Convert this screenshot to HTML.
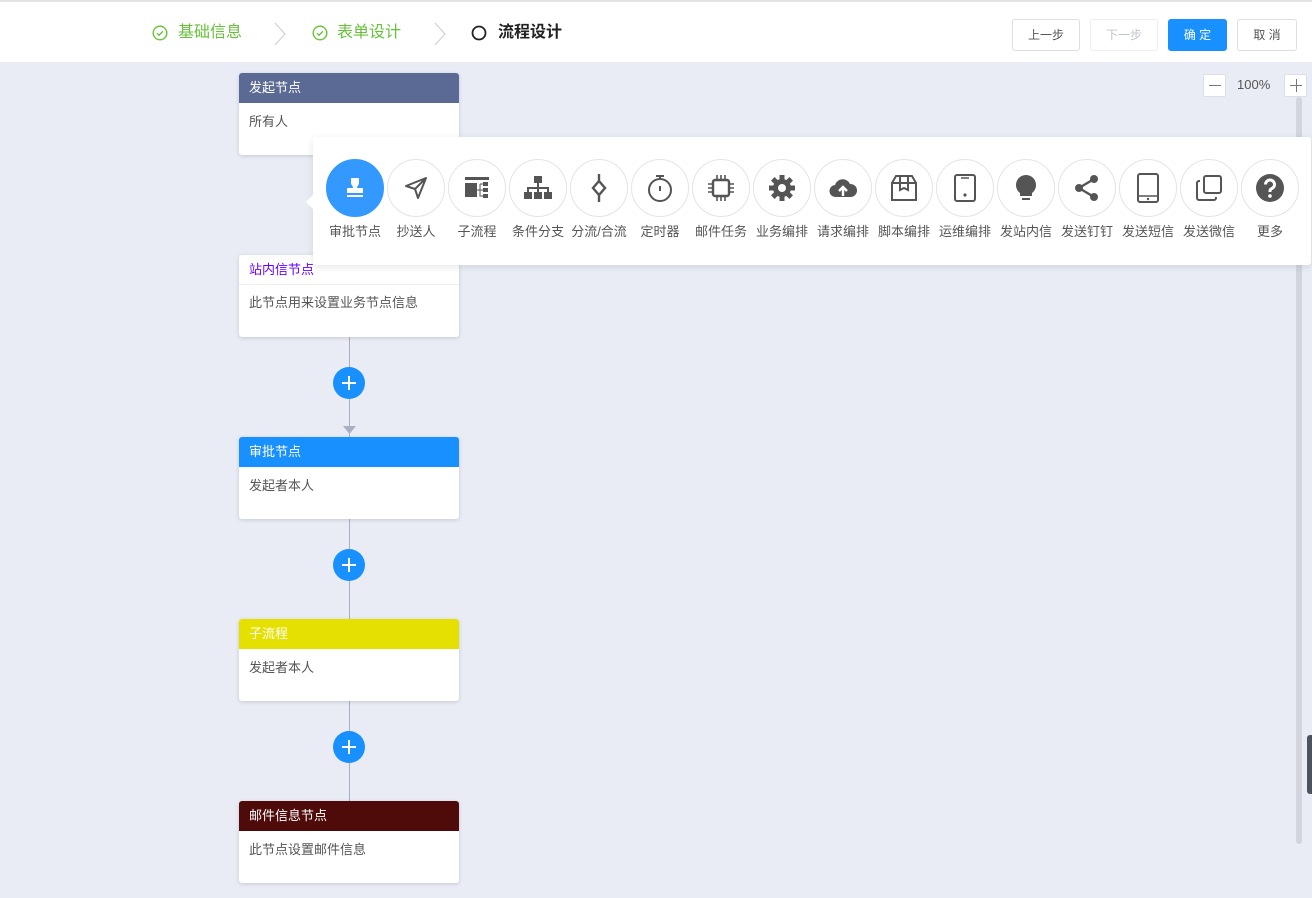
<!DOCTYPE html>
<html><head><meta charset="utf-8">
<style>
*{margin:0;padding:0;box-sizing:border-box}
body{width:1312px;height:898px;overflow:hidden;background:#e9ecf5;font-family:"Liberation Sans","Noto Sans CJK SC",sans-serif;position:relative}
.top{position:absolute;left:0;top:0;width:1312px;height:62px;background:#fff;border-top:2px solid #e2e2e2}
.step{position:absolute;top:21px;font-size:16px;line-height:20px}
.btn{position:absolute;top:17px;height:32px;border:1px solid #dcdfe6;border-radius:3px;background:#fff;font-size:12px;color:#555;text-align:center;line-height:30px}
.node{position:absolute;left:239px;width:220px;height:82px;background:#fff;border-radius:3px;box-shadow:0 1px 4px rgba(0,0,0,.15);overflow:hidden}
.node .h{height:30px;line-height:30px;padding-left:10px;font-size:13px;color:#fff}
.node .b{padding:10px;font-size:13px;color:#555;line-height:17px}
.line{position:absolute;left:349px;width:1px;background:#a9b0c4}
.plus{position:absolute;left:333px;width:32px;height:32px;border-radius:50%;background:#1890ff}
.plus:before{content:"";position:absolute;left:9px;top:15px;width:14px;height:1.5px;background:#fff}
.plus:after{content:"";position:absolute;left:15.3px;top:9px;width:1.5px;height:14px;background:#fff}
.pop{position:absolute;left:313px;top:137px;width:998px;height:128px;background:#fff;border-radius:3px;box-shadow:0 2px 8px rgba(0,0,0,.1)}
.it{position:absolute;top:22px;width:60px;text-align:center}
.c{width:58px;height:58px;border-radius:50%;border:1px solid #e4e4e4;margin:0 auto;display:flex;align-items:center;justify-content:center}
.it span{display:block;font-size:13px;color:#555;margin-top:4px;white-space:nowrap;margin-left:-10px;margin-right:-10px}
svg{display:block}
</style></head><body>
<div class="top">
 <svg style="position:absolute;left:152px;top:23px" width="16" height="16" viewBox="0 0 16 16"><circle cx="8" cy="8" r="6.8" fill="none" stroke="#67c23a" stroke-width="1.4"/><path d="M5 8.2l2 2 4-4" fill="none" stroke="#67c23a" stroke-width="1.4"/></svg>
 <div class="step" style="left:178px;color:#67c23a">基础信息</div>
 <svg style="position:absolute;left:273px;top:20px" width="14" height="24"><path d="M2 1l10 11-10 11" fill="none" stroke="#ccc" stroke-width="1"/></svg>
 <svg style="position:absolute;left:312px;top:23px" width="16" height="16" viewBox="0 0 16 16"><circle cx="8" cy="8" r="6.8" fill="none" stroke="#67c23a" stroke-width="1.4"/><path d="M5 8.2l2 2 4-4" fill="none" stroke="#67c23a" stroke-width="1.4"/></svg>
 <div class="step" style="left:337px;color:#67c23a">表单设计</div>
 <svg style="position:absolute;left:433px;top:20px" width="14" height="24"><path d="M2 1l10 11-10 11" fill="none" stroke="#ccc" stroke-width="1"/></svg>
 <svg style="position:absolute;left:471px;top:23px" width="16" height="16"><circle cx="8" cy="8" r="6.5" fill="none" stroke="#222" stroke-width="1.8"/></svg>
 <div class="step" style="left:498px;color:#222;font-weight:bold">流程设计</div>
 <div class="btn" style="left:1012px;width:68px">上一步</div>
 <div class="btn" style="left:1090px;width:68px;color:#c0c4cc;border-color:#ebeef5">下一步</div>
 <div class="btn" style="left:1168px;width:59px;background:#1890ff;border-color:#1890ff;color:#fff">确 定</div>
 <div class="btn" style="left:1237px;width:60px">取 消</div>
</div>

<div style="position:absolute;left:1203px;top:74px;width:23px;height:23px;background:#fff;border:1px solid #dcdfe6;border-radius:2px"><div style="position:absolute;left:5px;top:10px;width:12px;height:1px;background:#777"></div></div>
<div style="position:absolute;left:1237px;top:77px;font-size:13px;color:#555">100%</div>
<div style="position:absolute;left:1284px;top:74px;width:23px;height:23px;background:#fff;border:1px solid #dcdfe6;border-radius:2px"><div style="position:absolute;left:5px;top:10px;width:12px;height:1px;background:#777"></div><div style="position:absolute;left:10.5px;top:4px;width:1px;height:13px;background:#777"></div></div>
<div style="position:absolute;left:1296px;top:97px;width:6px;height:747px;background:#d2d5de;border-radius:3px"></div>
<div style="position:absolute;left:1307px;top:735px;width:5px;height:59px;background:#4c5260;border-radius:3px 0 0 3px"></div>

<div class="line" style="top:155px;height:728px"></div>
<svg style="position:absolute;left:343px;top:426px" width="13" height="9"><path d="M0 0h13L6.5 8z" fill="#a9b0c4"/></svg>

<div class="node" style="top:73px"><div class="h" style="background:#5a6a94">发起节点</div><div class="b">所有人</div></div>
<div class="node" style="top:255px"><div class="h" style="color:#6a00ff;border-bottom:1px solid #eee">站内信节点</div><div class="b" style="padding-top:9px">此节点用来设置业务节点信息</div></div>
<div class="plus" style="top:367px"></div>
<div class="node" style="top:437px"><div class="h" style="background:#1890ff">审批节点</div><div class="b">发起者本人</div></div>
<div class="plus" style="top:549px"></div>
<div class="node" style="top:619px"><div class="h" style="background:#e6e000">子流程</div><div class="b">发起者本人</div></div>
<div class="plus" style="top:731px"></div>
<div class="node" style="top:801px"><div class="h" style="background:#4f0a0a">邮件信息节点</div><div class="b">此节点设置邮件信息</div></div>

<div class="pop">
 <div style="position:absolute;left:-5px;top:60px;width:10px;height:10px;background:#fff;transform:rotate(45deg)"></div>
 <div class="it" style="left:12px"><div class="c" style="background:#3399ff;border-color:#3399ff"><svg width="26" height="26" viewBox="0 0 26 26" fill="#fff"><path d="M9 3h8v5c0 2-2 3-2 5h6v5H5v-5h6c0-2-2-3-2-5z"/><rect x="5" y="20" width="16" height="2"/></svg></div><span>审批节点</span></div>
 <div class="it" style="left:73px"><div class="c"><svg width="26" height="26" viewBox="0 0 26 26"><path d="M23 3L3 11l9 3 3 9z M12 14L23 3" fill="none" stroke="#555" stroke-width="2" stroke-linejoin="round"/></svg></div><span>抄送人</span></div>
 <div class="it" style="left:134px"><div class="c"><svg width="28" height="28" viewBox="0 0 28 28" fill="#555"><rect x="2" y="3" width="24" height="3"/><rect x="2" y="9" width="12" height="14"/><rect x="20" y="8" width="5" height="4"/><rect x="20" y="14" width="5" height="4"/><rect x="20" y="20" width="5" height="4"/><path d="M14 16h3M17 10v12h3M17 10h3M17 16h3" stroke="#555" fill="none"/></svg></div><span>子流程</span></div>
 <div class="it" style="left:195px"><div class="c"><svg width="30" height="28" viewBox="0 0 30 28" fill="#555"><rect x="11" y="2" width="8" height="7"/><rect x="1" y="18" width="8" height="7"/><rect x="11" y="18" width="8" height="7"/><rect x="21" y="18" width="8" height="7"/><path d="M15 9v9M5 18v-4h20v4" stroke="#555" stroke-width="2" fill="none"/></svg></div><span>条件分支</span></div>
 <div class="it" style="left:256px"><div class="c"><svg width="24" height="30" viewBox="0 0 24 30"><path d="M12 1v7M12 22v7M12 8l6 7-6 7-6-7z" fill="none" stroke="#555" stroke-width="2.4"/></svg></div><span>分流/合流</span></div>
 <div class="it" style="left:317px"><div class="c"><svg width="28" height="30" viewBox="0 0 28 30"><circle cx="14" cy="17" r="11" fill="none" stroke="#555" stroke-width="2"/><path d="M10 3h8M14 3v3M14 13v5" stroke="#555" stroke-width="2" fill="none"/></svg></div><span>定时器</span></div>
 <div class="it" style="left:378px"><div class="c"><svg width="30" height="30" viewBox="0 0 30 30"><rect x="7" y="7" width="16" height="16" rx="2" fill="none" stroke="#555" stroke-width="2.4"/><path d="M11 2v5M15 2v5M19 2v5M11 23v5M15 23v5M19 23v5M2 11h5M2 15h5M2 19h5M23 11h5M23 15h5M23 19h5" stroke="#555" stroke-width="1.6"/></svg></div><span>邮件任务</span></div>
 <div class="it" style="left:439px"><div class="c"><svg width="30" height="30" viewBox="0 0 30 30"><g stroke="#555" stroke-width="5"><path d="M15 2v26M2 15h26M5.8 5.8l18.4 18.4M24.2 5.8L5.8 24.2"/></g><circle cx="15" cy="15" r="9" fill="#555"/><circle cx="15" cy="15" r="4" fill="#fff"/></svg></div><span>业务编排</span></div>
 <div class="it" style="left:500px"><div class="c"><svg width="30" height="26" viewBox="0 0 30 26"><path d="M8 22a6 6 0 0 1-1-12 8 8 0 0 1 15-1 6.5 6.5 0 0 1 1 13z" fill="#555"/><path d="M15 21v-8M11 16l4-4 4 4" stroke="#fff" stroke-width="2.4" fill="none"/></svg></div><span>请求编排</span></div>
 <div class="it" style="left:561px"><div class="c"><svg width="30" height="30" viewBox="0 0 30 30"><path d="M3 10l4-7h16l4 7v17H3zM3 10h24M11 3v14l4-2 4 2V3" fill="none" stroke="#555" stroke-width="2"/></svg></div><span>脚本编排</span></div>
 <div class="it" style="left:622px"><div class="c"><svg width="24" height="30" viewBox="0 0 24 30"><rect x="2" y="2" width="20" height="26" rx="2" fill="none" stroke="#555" stroke-width="2"/><path d="M8 5h8" stroke="#555" stroke-width="1.5"/><circle cx="12" cy="22" r="1.6" fill="#555"/></svg></div><span>运维编排</span></div>
 <div class="it" style="left:683px"><div class="c"><svg width="26" height="30" viewBox="0 0 26 30"><path d="M13 2a10 10 0 0 1 6 18v3H7v-3a10 10 0 0 1 6-18z" fill="#555"/><rect x="9" y="25" width="8" height="2" fill="#555"/></svg></div><span>发站内信</span></div>
 <div class="it" style="left:744px"><div class="c"><svg width="28" height="28" viewBox="0 0 28 28"><path d="M21 5L6 14l15 9" stroke="#555" stroke-width="2.4" fill="none"/><circle cx="21" cy="5" r="4" fill="#555"/><circle cx="6" cy="14" r="4" fill="#555"/><circle cx="21" cy="23" r="4" fill="#555"/></svg></div><span>发送钉钉</span></div>
 <div class="it" style="left:805px"><div class="c"><svg width="24" height="30" viewBox="0 0 24 30"><rect x="2" y="1" width="20" height="28" rx="2" fill="none" stroke="#555" stroke-width="2"/><path d="M2 23h20" stroke="#555" stroke-width="1.5"/><circle cx="12" cy="26" r="1.2" fill="#555"/></svg></div><span>发送短信</span></div>
 <div class="it" style="left:866px"><div class="c"><svg width="30" height="30" viewBox="0 0 30 30"><rect x="10" y="3" width="17" height="17" rx="2" fill="none" stroke="#555" stroke-width="2"/><path d="M6 8H5a2 2 0 0 0-2 2v15a2 2 0 0 0 2 2h15a2 2 0 0 0 2-2v-1" fill="none" stroke="#555" stroke-width="2"/></svg></div><span>发送微信</span></div>
 <div class="it" style="left:927px"><div class="c"><svg width="30" height="30" viewBox="0 0 30 30"><circle cx="15" cy="15" r="14" fill="#555"/><path d="M10.5 11.5a4.5 4.5 0 1 1 6 4.2c-1 .5-1.5 1.2-1.5 2.3v1" fill="none" stroke="#fff" stroke-width="3"/><circle cx="15" cy="23" r="1.8" fill="#fff"/></svg></div><span>更多</span></div>
</div>
</body></html>
